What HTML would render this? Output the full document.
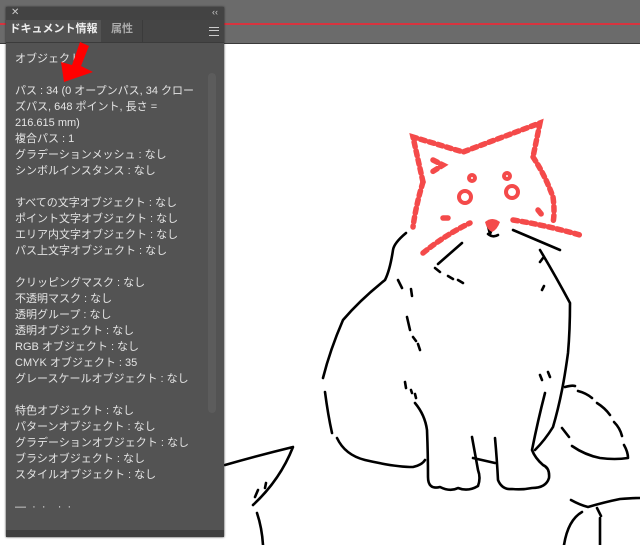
<!DOCTYPE html>
<html><head><meta charset="utf-8"><style>
html,body{margin:0;padding:0;width:640px;height:545px;overflow:hidden;background:#fff;}
.top{position:absolute;left:0;top:0;width:640px;height:43px;background:#6b6b6b;border-bottom:1px solid #3a3a3a;}
.red{position:absolute;left:0;top:23px;width:640px;height:2px;background:#d8343f;}
.panel{position:absolute;left:6px;top:7px;width:218px;height:530px;background:#535353;box-shadow:0 0 2px #222;}
.title{height:13px;background:#434343;color:#ccc;font:10px "Liberation Sans",sans-serif;position:relative;}
.tabs{height:22px;background:#454545;position:relative;border-bottom:1px solid #3b3b3b;}
.tab{position:absolute;top:0;height:22px;line-height:22px;font:bold 11px "Liberation Sans","Noto Sans CJK JP",sans-serif;}
.t1{left:0;width:95px;background:#535353;color:#eee;text-align:center;}
.t2{left:96px;width:40px;color:#aaa;text-align:center;font-weight:bold;border-right:1px solid #3b3b3b;}
.txt{position:absolute;left:9px;top:44px;color:#e4e4e4;font:11px/16px "Liberation Sans","Noto Sans CJK JP",sans-serif;white-space:pre;}
.thumb{position:absolute;left:202px;top:66px;width:8px;height:340px;background:#5c5c5c;border-radius:4px;}
.foot{position:absolute;left:0;bottom:0;width:218px;height:7px;background:#3f3f3f;}
</style></head><body>
<div class="top"></div><div class="red"></div>
<svg style="position:absolute;left:0;top:0" width="640" height="545" viewBox="0 0 640 545">
<g fill="none" stroke="#000" stroke-width="2.6" stroke-linecap="round" stroke-linejoin="round">
<path d="M406 233 Q394 243 393 250 Q390 270 385 280 Q360 300 343 320 Q330 350 323 378"/>
<path d="M325 392 Q328 415 332 433"/>
<path d="M337 438 Q345 455 365 460 Q395 467 413 467 Q422 465 425 460"/>
<path d="M540 250 Q555 275 570 303 Q570 330 568 353 Q565 375 562 390 Q558 410 553 427 Q545 440 535 450"/>
<path d="M415 403 Q425 415 427 430 Q428 455 428 477 Q428 490 440 487 Q450 492 458 488 Q468 492 478 486 Q481 478 478 470 L472 437"/>
<path d="M495 438 Q497 460 498 480 Q502 490 512 489 Q522 490 532 488 Q546 488 549 478 Q550 468 543 465 Q535 458 532 450 Q538 420 545 393"/>
<path d="M473 458 L495 463"/>
<path d="M565 387 Q572 385 575 386 M578 391 Q586 393 592 398 M597 403 Q605 408 610 415 M614 422 Q620 428 622 436 M624 445 Q628 452 628 458 Q615 460 600 458 Q585 455 572 446 M569 437 L562 428"/>
<path d="M225 465 Q260 455 293 447 Q280 480 253 505"/>
<path d="M257 513 Q262 528 263 545"/>
<path d="M255 497 L258 490 M265 488 L266 483"/>
<path d="M571 500 Q580 505 588 507 Q605 502 620 499 Q632 498 640 498"/>
<path d="M582 512 Q568 520 564 545 M597 508 L601 516 M600 518 L600 545"/>
<path d="M438 264 L462 243 M435 268 L440 272 M448 276 L453 279 M458 280 L463 283 M488 234 Q493 238 498 235 M488 226 L490 234 L493 226"/>
<path d="M513 230 L560 250 M540 262 L543 258 M398 280 L402 288 M411 289 L412 296 M407 317 L410 330 M413 337 L416 341 M418 344 L420 350 M405 382 L406 388 M411 390 L412 393 M415 394 L416 398 M542 380 L540 375 M550 377 L548 372 M544 286 L542 290"/>
</g>
<g fill="none" stroke="#f44a4a" stroke-width="5.5" stroke-linecap="round" stroke-dasharray="5 4">
<path d="M423 182 L413 137 L463 152 L540 123 L533 157"/>
<path d="M423 182 Q416 205 413 227"/>
<path d="M533 157 Q545 175 553 197 Q555 212 553 223"/>
<path d="M433 160 L443 165 L432 172"/>
<path d="M513 220 Q545 225 580 235"/>
<path d="M423 253 Q445 235 470 223"/>
<path d="M443 218 L448 218 M538 210 L542 215"/>
</g>
<g fill="none" stroke="#f44a4a" stroke-width="4">
<circle cx="465" cy="197" r="6"/><circle cx="512" cy="192" r="6"/>
<circle cx="472" cy="178" r="3"/><circle cx="507" cy="176" r="3"/>
</g>
<path d="M485 222 Q492 216 500 222 Q497 230 492 232 Q487 230 485 222Z" fill="#f44a4a"/>
</svg>
<div class="panel">
<div class="title"><span style="position:absolute;left:5px;top:0;">✕</span><span style="position:absolute;right:6px;top:0;font-size:9px;">‹‹</span></div>
<div class="tabs"><div class="tab t1">ドキュメント情報</div><div class="tab t2">属性</div>
<div style="position:absolute;right:5px;top:7px;width:10px;height:7px;border-top:1px solid #ccc;border-bottom:1px solid #ccc;"><div style="margin-top:2px;height:1px;background:#ccc"></div></div></div>
<div class="thumb"></div>
<div class="txt">オブジェクト

パス : 34 (0 オープンパス, 34 クロー
ズパス, 648 ポイント, 長さ =
216.615 mm)
複合パス : 1
グラデーションメッシュ : なし
シンボルインスタンス : なし

すべての文字オブジェクト : なし
ポイント文字オブジェクト : なし
エリア内文字オブジェクト : なし
パス上文字オブジェクト : なし

クリッピングマスク : なし
不透明マスク : なし
透明グループ : なし
透明オブジェクト : なし
RGB オブジェクト : なし
CMYK オブジェクト : 35
グレースケールオブジェクト : なし

特色オブジェクト : なし
パターンオブジェクト : なし
グラデーションオブジェクト : なし
ブラシオブジェクト : なし
スタイルオブジェクト : なし

—  ·  ·    ·  ·</div>
<div class="foot"></div>
</div>
<svg style="position:absolute;left:0;top:0" width="120" height="100" viewBox="0 0 120 100"><path d="M80 42 L89 46 L81 66 L93 72 L64 82 L61 62 L72 65Z" fill="#f00"/></svg>
</body></html>
